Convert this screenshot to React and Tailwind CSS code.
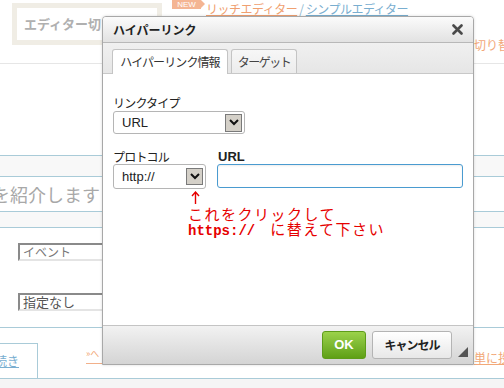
import React from "react";

const JP = { fontFamily: '"Noto Sans CJK JP", "Liberation Sans", sans-serif' };

function Chevron() {
  return (
    <svg width="10" height="7" viewBox="0 0 10 7">
      <polyline points="1,1 5,5 9,1" fill="none" stroke="#111" strokeWidth="2" />
    </svg>
  );
}

function Select({ width, height, label, btnH }) {
  return (
    <div
      className="flex items-center justify-between rounded-[3px] border border-[#b5b5b5] bg-white pl-[8px] pr-[2px]"
      style={{ width, height }}
    >
      <span className="text-[13px] text-[#222]" style={{ fontFamily: '"Liberation Sans", sans-serif' }}>
        {label}
      </span>
      <div
        className="flex w-[17px] items-center justify-center border border-[#7a7a7a] bg-[#d4d0c8]"
        style={{ height: btnH }}
      >
        <Chevron />
      </div>
    </div>
  );
}

export default function App() {
  return (
    <div className="relative h-[388px] w-[504px] overflow-hidden bg-white" style={JP}>
      {/* header area */}
      <div className="flex h-[64px] items-start border-b border-[#e6e6e6]">
        <div className="ml-[12px] mt-[3px] flex h-[42px] w-[150px] shrink-0 items-center border-[5px] border-[#f0ede5] bg-white pl-[7px]">
          <span className="whitespace-nowrap text-[13px] font-bold text-[#b0b0b0]">エディター切り替え</span>
        </div>
        <div className="ml-[10px] flex shrink-0 items-start">
          <div className="flex h-[9px] w-[29px] items-center justify-center bg-[#f4b593] text-[8px] leading-none text-white" style={{ fontFamily: '"Liberation Sans", sans-serif' }}>
            NEW
          </div>
          <div className="h-0 w-0 border-y-[4.5px] border-l-[4px] border-y-transparent border-l-[#f4b593]" />
          <span className="ml-[1px] mt-[3px] whitespace-nowrap text-[12px] leading-[12px] tracking-[-0.5px]">
            <span className="text-[#f0a070] underline">リッチエディター</span>
            <span className="text-[#8fb8d0]"> / </span>
            <span className="text-[#79aed0] underline">シンプルエディター</span>
          </span>
        </div>
        <div className="ml-auto mt-[31px] w-[30px] shrink-0 overflow-hidden">
          <span className="whitespace-nowrap text-[12px] text-[#f2a878]">切り替え</span>
        </div>
      </div>

      {/* spacer */}
      <div className="h-[91px]" />

      {/* band 1 */}
      <div className="h-[22px] border-y border-[#a9cbd8] bg-[#f8f8f8]" />
      <div className="flex h-[34px] items-center">
        <span className="-ml-[8px] whitespace-nowrap text-[18px] leading-none text-[#a8a8a8]">を紹介します</span>
      </div>
      <div className="h-[17px] border-y border-[#a9cbd8] bg-[#f8f8f8]" />

      {/* selects area */}
      <div className="flex h-[100px] flex-col border-b border-[#a9cbd8] pl-[18px] pt-[15px]">
        <div className="flex h-[18px] w-[110px] items-center border-2 border-b-[#e4e4e4] border-l-[#8a8a8a] border-r-[#e4e4e4] border-t-[#8a8a8a] pl-[3px] text-[12px] text-[#777]">
          イベント
        </div>
        <div className="mt-[32px] flex h-[18px] w-[110px] items-center border-2 border-b-[#e4e4e4] border-l-[#8a8a8a] border-r-[#e4e4e4] border-t-[#8a8a8a] pl-[3px] text-[13px] text-[#555]">
          指定なし
        </div>
      </div>

      {/* bottom tabs */}
      <div className="flex h-[51px] items-end border-b border-[#a9cbd8]">
        <div className="flex h-[35px] w-[38px] items-center border-r border-t border-[#a9cbd8] bg-white">
          <span className="-ml-[5px] whitespace-nowrap text-[12px] text-[#79aed0] underline">続き</span>
        </div>
        <div className="mb-[14px] ml-[48px] flex-1 border-b border-[#f2b08a] pb-[1px]">
          <span className="whitespace-nowrap text-[9px] leading-none text-[#f2a878]">»へ</span>
        </div>
        <div className="mb-[10px] w-[30px] shrink-0 overflow-hidden">
          <span className="whitespace-nowrap text-[12px] text-[#f2a878] underline">単に投稿</span>
        </div>
      </div>
      <div className="h-[9px] bg-[#f5f5f5]" />

      {/* dialog */}
      <div className="absolute left-[102px] top-[16px] flex h-[349px] w-[372px] flex-col overflow-hidden rounded-t-[4px] border border-[#a8a8a8] bg-white shadow-[0_0_3px_rgba(0,0,0,0.15)]">
        {/* title */}
        <div className="flex h-[26px] shrink-0 items-center justify-between border-b border-[#b8b8b8] bg-gradient-to-b from-[#fbfbfb] to-[#e2e2e2] pl-[10px] pr-[10px]">
          <span className="text-[12px] font-bold text-[#222]">ハイパーリンク</span>
          <svg width="11" height="11" viewBox="0 0 11 11">
            <path d="M1.5 1.5 L9.5 9.5 M9.5 1.5 L1.5 9.5" stroke="#4a4a4a" strokeWidth="2.6" strokeLinecap="round" />
          </svg>
        </div>
        {/* tabs */}
        <div className="flex h-[31px] shrink-0 items-end gap-[3px] border-b border-[#c8c8c8] bg-gradient-to-b from-[#f0f0f0] to-[#e6e6e6] pl-[9px]">
          <div className="-mb-px flex h-[25px] w-[116px] items-center justify-center rounded-t-[3px] border border-b-0 border-[#c4c4c4] bg-white text-[12px] tracking-[-0.9px] text-[#333]">
            ハイパーリンク情報
          </div>
          <div className="flex h-[24px] w-[66px] items-center justify-center rounded-t-[3px] border border-b-0 border-[#c4c4c4] bg-gradient-to-b from-[#f7f7f7] to-[#ececec] text-[12px] tracking-[-1.5px] text-[#444]">
            ターゲット
          </div>
        </div>
        {/* content */}
        <div className="flex flex-1 flex-col pl-[10px] pt-[22px]">
          <span className="text-[12px] leading-[14px] tracking-[-0.8px] text-[#222]">リンクタイプ</span>
          <div className="mt-[1px]">
            <Select width={132} height={23} label="URL" btnH={18} />
          </div>
          <div className="mt-[16px] flex items-start gap-[11px]">
            <div className="flex flex-col">
              <span className="text-[12px] leading-[14px] tracking-[-0.8px] text-[#222]">プロトコル</span>
              <div>
                <Select width={93} height={25} label="http://" btnH={17} />
              </div>
            </div>
            <div className="flex flex-col">
              <span className="pl-[1px] text-[13px] font-bold leading-[14px] text-[#222]" style={{ fontFamily: '"Liberation Sans", sans-serif' }}>
                URL
              </span>
              <div className="h-[24px] w-[246px] rounded-[3px] border border-[#4a9bd0] bg-white shadow-[inset_0_1px_2px_rgba(0,0,0,0.08)]" />
            </div>
          </div>
          <div className="ml-[75px] mt-[2px] flex flex-col text-[#e60000]">
            <svg className="ml-[3px]" width="9" height="14" viewBox="0 0 9 14">
              <path d="M4.5 1 V13 M1 5 L4.5 1 L8 5" fill="none" stroke="#e60000" strokeWidth="1.4" />
            </svg>
            <span className="mt-[1px] whitespace-nowrap text-[15px] leading-[15px] tracking-[1.5px]">これをクリックして</span>
            <span className="whitespace-nowrap text-[15px] leading-[15px] tracking-[1.5px]">
              <span className="text-[14px] font-bold tracking-normal" style={{ fontFamily: '"Liberation Mono", monospace' }}>https://</span>
              <span className="ml-[15px]">に替えて下さい</span>
            </span>
          </div>
        </div>
        {/* footer */}
        <div className="flex h-[39px] shrink-0 items-center justify-end border-t border-[#c4c4c4] bg-gradient-to-b from-[#f2f2f2] to-[#d4d4d4] pr-[5px]">
          <div className="flex h-[28px] w-[44px] items-center justify-center rounded-[3px] border border-[#5e9c1a] bg-gradient-to-b from-[#9bd24a] to-[#5fa014] text-[13px] font-bold text-white" style={{ fontFamily: '"Liberation Sans", sans-serif' }}>
            OK
          </div>
          <div className="ml-[6px] flex h-[28px] w-[80px] items-center justify-center rounded-[3px] border border-[#b4b4b4] bg-gradient-to-b from-[#ffffff] to-[#e8e8e8] text-[12px] font-bold tracking-[-1px] text-[#222]">
            キャンセル
          </div>
          <svg className="ml-[6px] mt-[14px]" width="10" height="10" viewBox="0 0 10 10">
            <polygon points="10,0 10,10 0,10" fill="#555" />
          </svg>
        </div>
      </div>
    </div>
  );
}
